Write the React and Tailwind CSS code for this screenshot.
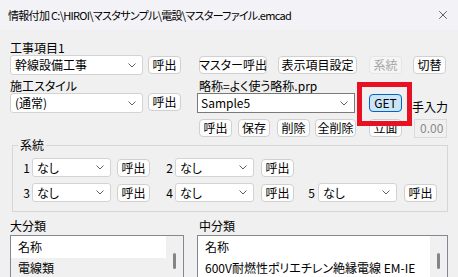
import { X } from "lucide-react";

function Chevron() {
  return (
    <svg width="8" height="5" viewBox="0 0 8 5" className="shrink-0">
      <polyline points="0.5,0.5 4,4 7.5,0.5" fill="none" stroke="#606060" strokeWidth="1" />
    </svg>
  );
}

function Combo({ w, text, edit }) {
  return (
    <div
      className={`flex shrink-0 items-center justify-between bg-white pr-[6px] ${w} ${
        edit ? "h-[20px] border border-[#7a7a7a] pl-[3px]" : "h-[20px] rounded-[3px] border border-[#d3d3d3] pl-[4px]"
      }`}
    >
      <span className="truncate leading-[16px]">{text}</span>
      <Chevron />
    </div>
  );
}

function Btn({ w, children, disabled, primary, className = "" }) {
  let look = "border-[#d0d0d0] bg-[#fdfdfd] text-black";
  if (disabled) look = "border-[#e6e6e6] bg-[#f5f5f5] text-[#a6a6a6]";
  if (primary) look = "border-[#0067c0] bg-[#cce4f7] text-black";
  return (
    <div
      className={`flex h-[18px] shrink-0 items-center justify-center whitespace-nowrap rounded-[4px] border leading-[16px] ${look} ${w} ${className}`}
    >
      {children}
    </div>
  );
}

function Num({ n, className = "" }) {
  return <span className={`w-[10px] shrink-0 text-right ${className}`}>{n}</span>;
}

function ListBox({ w, rows, className = "" }) {
  return (
    <div className={`flex h-[60px] shrink-0 border border-[#828790] bg-white ${w} ${className}`}>
      <div className="flex-1">
        {rows.map((r, i) => (
          <div
            key={i}
            className={`flex items-center whitespace-nowrap pl-[7px] ${i === 0 ? "h-[22px]" : "h-[20px]"} ${r.gray ? "bg-[#f0f0f0]" : ""}`}
          >
            {r.text}
          </div>
        ))}
      </div>
      <div className="flex w-[17px] shrink-0 justify-center bg-[#f0f0f0]">
        <div className="mt-[17px] h-[16px] w-[3px] rounded-full bg-[#858585]" />
      </div>
    </div>
  );
}

export default function App() {
  return (
    <div className="relative h-[277px] w-[458px] overflow-hidden bg-[#f0f0f0] font-['Noto_Sans_CJK_JP','Noto_Sans',sans-serif] text-[12px] text-black [font-feature-settings:'palt']">
      {/* title bar */}
      <div className="flex h-[30px] items-center justify-between bg-[#f3f2f6] pl-[8px] pr-[8px]">
        <span className="whitespace-nowrap text-[11px] tracking-[-0.7px]">
          情報付加 C:\HIROI\マスタサンプル\電設\マスターファイル.emcad
        </span>
        <X size={14} strokeWidth={1.2} className="text-[#222]" />
      </div>

      <div className="px-[10px]">
        <div className="mt-[11px] h-[14px] leading-[14px]">工事項目1</div>

        <div className="flex h-[20px] items-center">
          <Combo w="w-[133px]" text="幹線設備工事" />
          <Btn w="w-[33px]" className="ml-[5px]">呼出</Btn>
          <Btn w="w-[68px]" className="ml-[18px]">マスター呼出</Btn>
          <Btn w="w-[79px]" className="ml-[11px]">表示項目設定</Btn>
          <Btn w="w-[33px]" className="ml-[12px]" disabled>系統</Btn>
          <Btn w="w-[33px]" className="ml-[11px]">切替</Btn>
        </div>

        <div className="mt-[3px] flex h-[15px] leading-[15px]">
          <span className="w-[189px] shrink-0">施工スタイル</span>
          <span>略称=よく使う略称.prp</span>
        </div>

        <div className="flex h-[20px] items-start">
          <Combo w="w-[133px]" text="(通常)" />
          <Btn w="w-[33px]" className="ml-[5px]">呼出</Btn>
          <Combo w="w-[158px] ml-[16px]" text="Sample5" edit />
          <Btn w="w-[33px]" className="ml-[14px] mt-[1px]" primary>GET</Btn>
          <span className="ml-[10px] mt-[7px] whitespace-nowrap leading-[14px]">手入力</span>
        </div>

        <div className="mt-[6px] flex h-[18px] items-center pl-[189px]">
          <Btn w="w-[33px]">呼出</Btn>
          <Btn w="w-[32px]" className="ml-[6px]">保存</Btn>
          <Btn w="w-[33px]" className="ml-[7px]">削除</Btn>
          <Btn w="w-[41px]" className="ml-[5px]">全削除</Btn>
          <Btn w="w-[33px]" className="ml-[13px]">立面</Btn>
          <div className="ml-[12px] flex h-[19px] w-[33px] shrink-0 items-center border border-[#dadada] bg-[#f0f0f0] pl-[5px] text-[#8a8a8a]">
            0.00
          </div>
        </div>

        <fieldset className="ml-[2px] w-[436px] border border-[#d6d6d6] pb-[9px] pl-[7px]">
          <legend className="ml-[-2px] px-[2px] leading-[16px]">系統</legend>
          <div className="mt-[5px] flex h-[19px] items-center">
            <Num n="1" />
            <Combo w="w-[79px] ml-[2px] !h-[19px]" text="なし" />
            <Btn w="w-[33px]" className="ml-[6px]">呼出</Btn>
            <Num n="2" className="ml-[13px]" />
            <Combo w="w-[79px] ml-[2px] !h-[19px]" text="なし" />
            <Btn w="w-[33px]" className="ml-[7px]">呼出</Btn>
          </div>
          <div className="mt-[6px] flex h-[19px] items-center">
            <Num n="3" />
            <Combo w="w-[79px] ml-[2px] !h-[19px]" text="なし" />
            <Btn w="w-[33px]" className="ml-[6px]">呼出</Btn>
            <Num n="4" className="ml-[13px]" />
            <Combo w="w-[79px] ml-[2px] !h-[19px]" text="なし" />
            <Btn w="w-[33px]" className="ml-[7px]">呼出</Btn>
            <Num n="5" className="ml-[11px]" />
            <Combo w="w-[79px] ml-[3px] !h-[19px]" text="なし" />
            <Btn w="w-[33px]" className="ml-[7px]">呼出</Btn>
          </div>
        </fieldset>

        <div className="mt-[7px] flex h-[14px] leading-[14px]">
          <span className="w-[189px] shrink-0">大分類</span>
          <span>中分類</span>
        </div>

        <div className="mt-[2px] flex">
          <ListBox w="w-[174px]" rows={[{ text: "名称" }, { text: "電線類", gray: true }]} />
          <ListBox
            w="w-[251px]"
            className="ml-[13px]"
            rows={[{ text: "名称" }, { text: "600V耐燃性ポリエチレン絶縁電線 EM-IE" }]}
          />
        </div>
      </div>

      {/* red highlight drawn over the GET button */}
      <div className="pointer-events-none absolute left-[357px] top-[82px] h-[44px] w-[55px] border-[5px] border-[#e81123]" />
    </div>
  );
}
